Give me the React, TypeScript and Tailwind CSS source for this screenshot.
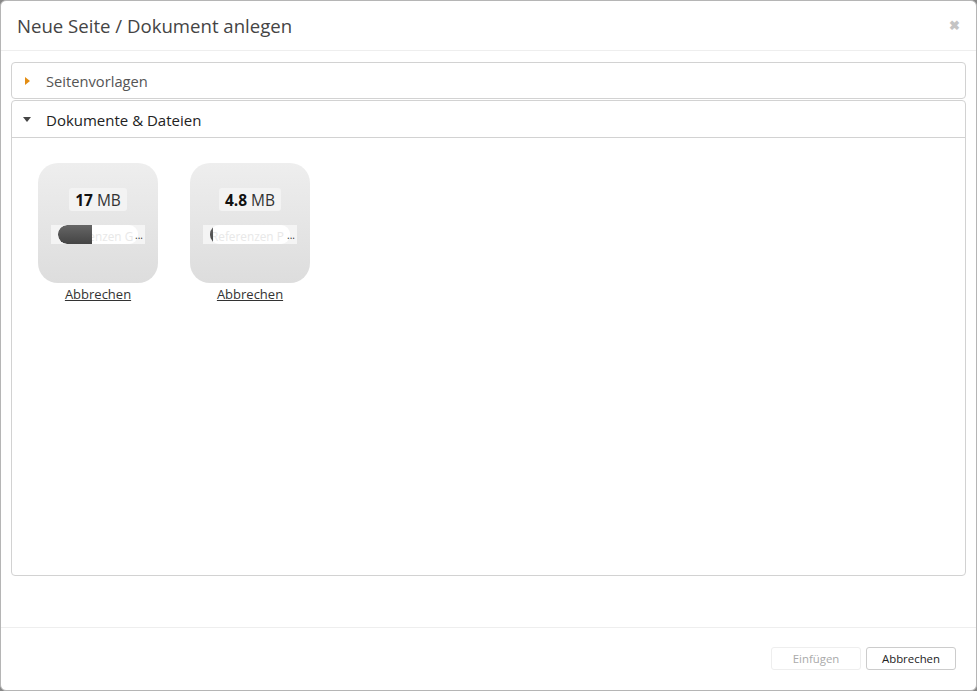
import React from "react";

const font = { fontFamily: '"Open Sans", "Noto Sans", sans-serif' };

const UploadCard = ({
  size,
  unit,
  name,
  progress,
}: {
  size: string;
  unit: string;
  name: string;
  progress: string;
}) => {
  return (
    <div className="w-[120px] flex flex-col items-center">
      <div className="w-[120px] h-[120px] rounded-[20px] bg-gradient-to-b from-[#eeeeee] to-[#dddddd] flex flex-col items-center pt-[25px]">
        <div className="h-[23px] px-[6px] rounded-[3px] bg-[#f3f3f3] flex items-center text-[15.5px] leading-none text-[#333] pt-[2px]">
          <span className="font-bold text-[#111] mr-[4px]">{size}</span>
          {unit}
        </div>
        <div className="relative mt-[14px] w-[94px] h-[19px] bg-[#f4f4f4] flex items-center">
          <div className="relative ml-[7px] w-[80px] h-[19px] rounded-[9px] bg-white overflow-hidden shrink-0">
            <span className="block pl-[1px] pt-[1px] leading-[20px] text-[11.8px] text-[#e8e8e8] whitespace-nowrap">
              {name}
            </span>
            <div
              className="absolute left-0 top-0 h-[19px] rounded-l-[9px] bg-gradient-to-b from-[#666666] to-[#444444]"
              style={{ width: progress }}
            />
          </div>
          <span className="relative ml-[-3px] text-[10px] leading-[19px] text-[#333] pt-[2px]">...</span>
        </div>
      </div>
      <a href="#" className="mt-[3px] text-[13px] leading-[17px] text-[#333] underline">
        Abbrechen
      </a>
    </div>
  );
};

export default function App() {
  return (
    <div style={font} className="w-[977px] h-[691px] bg-[#888] overflow-hidden">
      <div className="w-full h-full bg-white border border-[#b5b5b5] rounded-[6px] flex flex-col">
        <div className="h-[50px] shrink-0 border-b border-[#eeeeee] flex items-center justify-between pl-4 pr-[16px]">
          <h1 className="text-[18.6px] leading-none text-[#444] pt-[2px]">Neue Seite / Dokument anlegen</h1>
          <span className="text-[#c4c4c4] text-[13px] font-bold leading-none">✖</span>
        </div>

        <div className="flex-1 px-[10px] pt-[11px] flex flex-col gap-[1px]">
          <div className="h-[37px] border border-[#d2d2d2] rounded-[4px] flex items-center">
            <svg className="ml-[13px] w-[5px] h-[8px]" viewBox="0 0 5 8">
              <path d="M0 0 L5 4 L0 8 Z" fill="#e38d13" />
            </svg>
            <span className="ml-[16px] text-[14.7px] text-[#555] pt-[1px]">Seitenvorlagen</span>
          </div>

          <div className="h-[476px] border border-[#d2d2d2] rounded-[4px] flex flex-col">
            <div className="h-[37px] shrink-0 border-b border-[#d2d2d2] flex items-center">
              <svg className="ml-[11px] w-[8px] h-[5px]" viewBox="0 0 8 5">
                <path d="M0 0 L8 0 L4 5 Z" fill="#444" />
              </svg>
              <span className="ml-[15px] text-[15px] text-[#222] pt-[3px]">Dokumente &amp; Dateien</span>
            </div>
            <div className="flex gap-8 pl-[26px] pt-[25px]">
              <UploadCard size="17" unit="MB" name="Referenzen G" progress="34px" />
              <UploadCard size="4.8" unit="MB" name="Referenzen P" progress="3px" />
            </div>
          </div>
        </div>

        <div className="h-[63px] shrink-0 border-t border-[#eeeeee] flex justify-end items-start gap-[5px] pt-[19px] pr-[20px]">
          <button className="w-[90px] h-[23px] rounded-[3px] border border-[#eeeeee] bg-white text-[11.4px] text-[#aaa]">
            Einfügen
          </button>
          <button className="w-[90px] h-[23px] rounded-[3px] border border-[#cccccc] bg-white text-[11.4px] text-[#222]">
            Abbrechen
          </button>
        </div>
      </div>
    </div>
  );
}
